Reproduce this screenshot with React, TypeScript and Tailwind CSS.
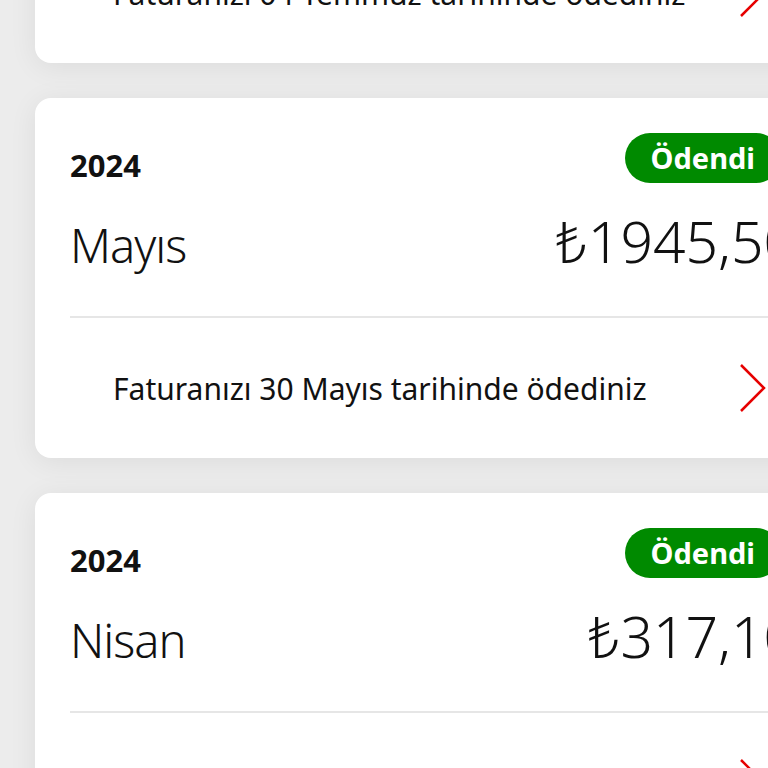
type Bill = {
  year: string;
  month: string;
  amount: string;
  paidOn: string;
};

const bills: Bill[] = [
  { year: "2024", month: "Haziran", amount: "₺1210,40", paidOn: "04 Temmuz" },
  { year: "2024", month: "Mayıs", amount: "₺1945,50", paidOn: "30 Mayıs" },
  { year: "2024", month: "Nisan", amount: "₺317,10", paidOn: "29 Nisan" },
];

function Chevron() {
  return (
    <svg width="30" height="50" viewBox="0 0 30 50" fill="none" className="shrink-0">
      <path d="M3 2 L26 25 L3 48" stroke="#e60000" strokeWidth="2.5" strokeLinejoin="miter" />
    </svg>
  );
}

function BillCard({ bill }: { bill: Bill }) {
  return (
    <div className="h-[360px] rounded-[16px] bg-white px-[35px] shadow-[0_4px_28px_rgba(0,0,0,0.07)]">
      <div className="flex items-start justify-between pt-[35px]">
        <p className="mt-[16px] text-[31px] leading-[32px] font-bold text-[#111]">{bill.year}</p>
        <span className="flex h-[50px] items-center rounded-full bg-[#008a00] px-[26px] text-[29px] font-bold text-white">
          Ödendi
        </span>
      </div>

      <div className="mt-[30px] flex items-baseline justify-between">
        <p className="text-[47px] leading-[50px] font-light tracking-[-1px] text-[#111]">{bill.month}</p>
        <p className="-mr-[15px] text-[57px] leading-[56px] font-light text-[#111]">{bill.amount}</p>
      </div>

      <div className="mt-[46px] h-[2px] bg-[#e6e6e6]" />

      <div className="flex h-[140px] items-center justify-between pl-[43px] pr-[13px]">
        <p className="text-[30px] text-[#111]">Faturanızı {bill.paidOn} tarihinde ödediniz</p>
        <Chevron />
      </div>
    </div>
  );
}

export default function App() {
  return (
    <div className="h-[768px] w-[768px] overflow-hidden bg-[#ececec] [font-family:'Noto_Sans',sans-serif]">
      <div className="-mt-[297px] flex w-[816px] flex-col gap-[35px] pl-[35px]">
        {bills.map((bill, idx) => (
          <BillCard key={idx} bill={bill} />
        ))}
      </div>
    </div>
  );
}
